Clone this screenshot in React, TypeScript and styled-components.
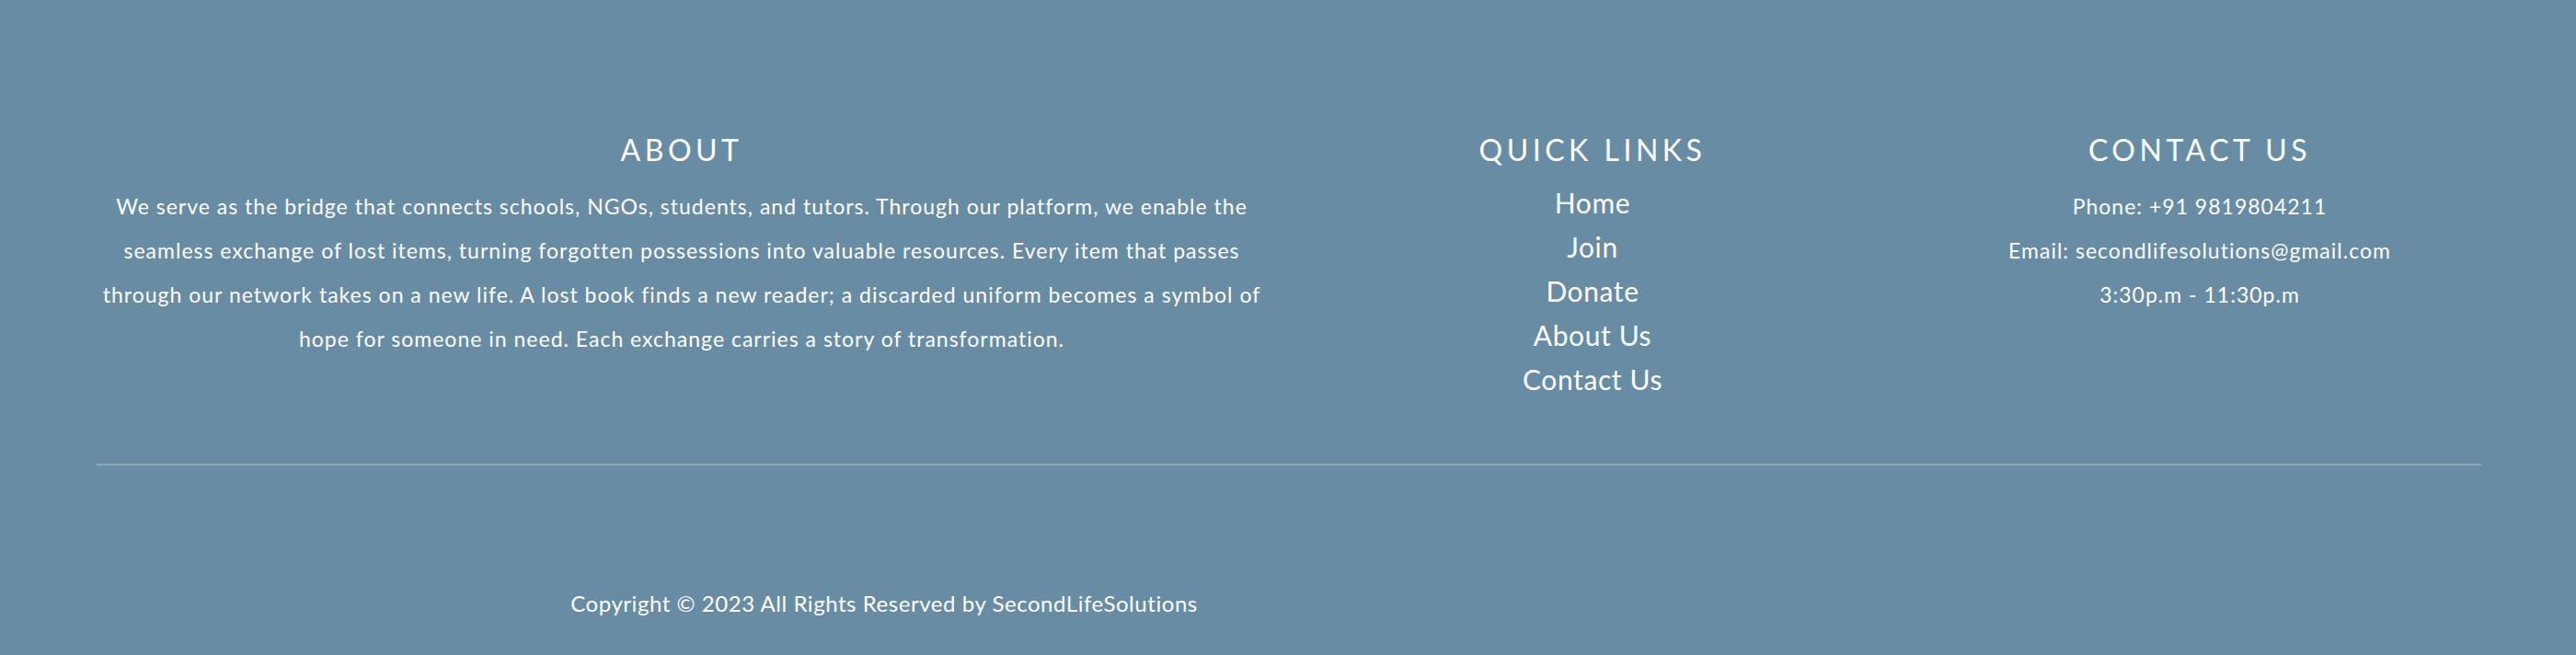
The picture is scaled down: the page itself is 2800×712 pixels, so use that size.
import React from 'react';
import styled, { createGlobalStyle } from 'styled-components';

const GlobalStyle = createGlobalStyle`
  html, body {
    margin: 0;
    padding: 0;
    background-color: #688ca3;
  }
  * {
    box-sizing: border-box;
  }
`;

const FooterWrapper = styled.footer`
  background-color: #688ca3;
  color: #ffffff;
  font-family: 'Lato', 'Open Sans', sans-serif;
  padding: 144px 103px 39px 105px;
  height: 712px;
`;

const Columns = styled.div`
  display: grid;
  grid-template-columns: 1272px 708px 1fr;
  align-items: start;
`;

const Column = styled.div`
  display: flex;
  flex-direction: column;
  align-items: center;
  text-align: center;
`;

const Heading = styled.h3`
  margin: 0;
  font-size: 32px;
  line-height: 38px;
  font-weight: 400;
  letter-spacing: 4.5px;
  text-transform: uppercase;
`;

const Text = styled.p`
  margin: 18px 0 0;
  font-size: 23px;
  line-height: 48px;
  font-weight: 400;
  letter-spacing: 1px;
`;

const LinkList = styled.ul`
  list-style: none;
  margin: 14px 0 0;
  padding: 0;
`;

const LinkItem = styled.li`
  font-size: 30px;
  line-height: 48px;
  letter-spacing: 0.6px;
`;

const Link = styled.a`
  color: #ffffff;
  text-decoration: none;
`;

const Divider = styled.hr`
  margin: 68px 0 0;
  border: none;
  height: 2px;
  background-color: rgba(255, 255, 255, 0.25);
`;

const BottomRow = styled.div`
  display: grid;
  grid-template-columns: 1712px 1fr;
  margin-top: 135px;
`;

const Copyright = styled.p`
  margin: 0;
  text-align: center;
  font-size: 24px;
  line-height: 30px;
  letter-spacing: 0.55px;
`;

const links = ['Home', 'Join', 'Donate', 'About Us', 'Contact Us'];

const App = () => {
  return (
    <>
      <GlobalStyle />
      <FooterWrapper>
        <Columns>
          <Column>
            <Heading>About</Heading>
            <Text>
              We serve as the bridge that connects schools, NGOs, students, and tutors. Through our platform, we enable the
              <br />
              seamless exchange of lost items, turning forgotten possessions into valuable resources. Every item that passes
              <br />
              through our network takes on a new life. A lost book finds a new reader; a discarded uniform becomes a symbol of
              <br />
              hope for someone in need. Each exchange carries a story of transformation.
            </Text>
          </Column>
          <Column>
            <Heading>Quick Links</Heading>
            <LinkList>
              {links.map((link) => (
                <LinkItem key={link}>
                  <Link href="#">{link}</Link>
                </LinkItem>
              ))}
            </LinkList>
          </Column>
          <Column>
            <Heading>Contact Us</Heading>
            <Text>
              Phone: +91 9819804211
              <br />
              Email: secondlifesolutions@gmail.com
              <br />
              3:30p.m - 11:30p.m
            </Text>
          </Column>
        </Columns>
        <Divider />
        <BottomRow>
          <Copyright>Copyright © 2023 All Rights Reserved by SecondLifeSolutions</Copyright>
        </BottomRow>
      </FooterWrapper>
    </>
  );
};

export default App;
